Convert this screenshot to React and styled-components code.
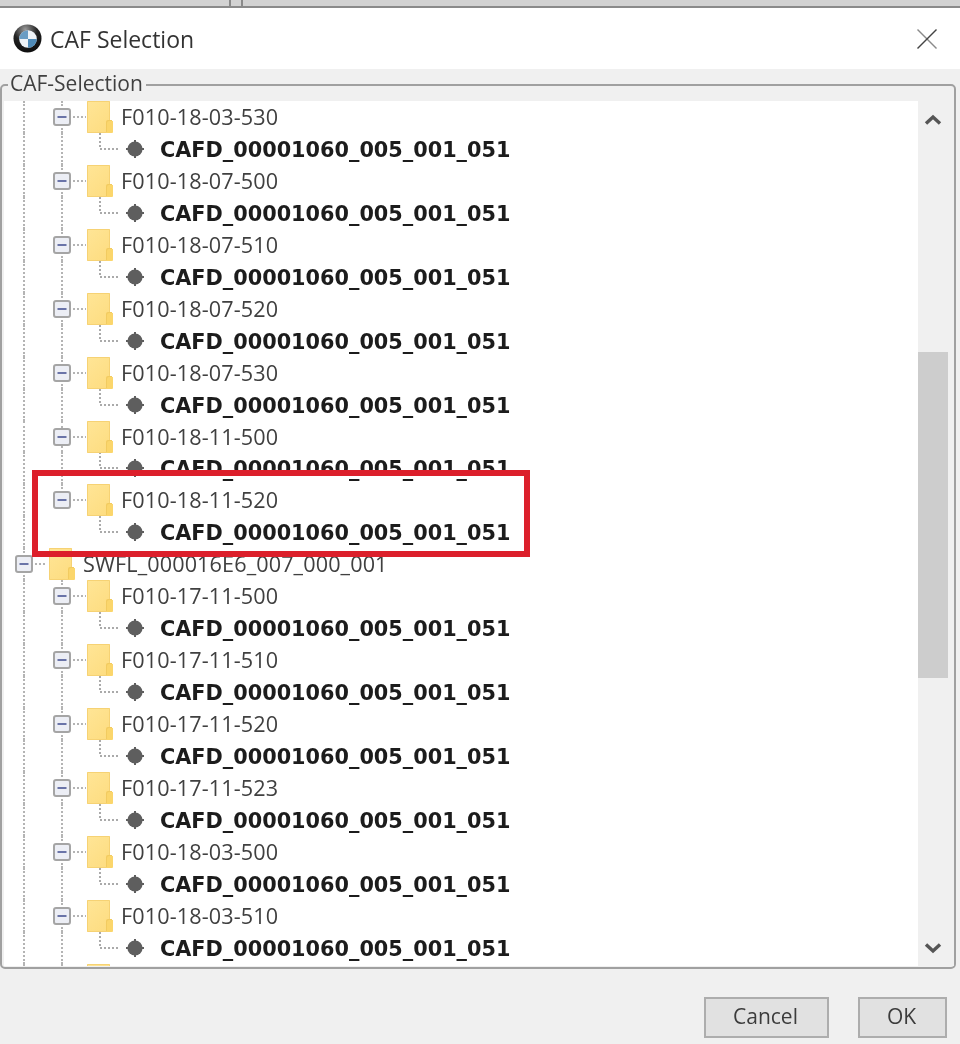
import React from 'react';
import styled, { createGlobalStyle } from 'styled-components';

const Global = createGlobalStyle`
  html, body { margin: 0; padding: 0; background: #f0f0f0; }
  body { font-family: "Open Sans", "Noto Sans", "Liberation Sans", sans-serif; overflow: hidden; }
`;

const Page = styled.div`
  position: relative;
  width: 960px;
  height: 1044px;
  display: flex;
  flex-direction: column;
  overflow: hidden;
  filter: blur(0.6px);
`;

const TopStrip = styled.div`
  height: 6px;
  flex: none;
  background: #d2d2d2;
  border-bottom: 2px solid #8a8a8a;
  display: flex;
  padding-left: 229px;
  gap: 10px;
`;
const StripLine = styled.span`
  width: 2px;
  background: #8a8a8a;
`;

const TitleBar = styled.header`
  height: 61px;
  flex: none;
  background: #fff;
  display: flex;
  align-items: center;
  padding: 0 22px 0 13px;
`;
const Title = styled.h1`
  margin: 2px 0 0 8px;
  flex: 1;
  font-size: 23px;
  font-weight: 400;
  color: #333;
  line-height: 1;
`;

const Body = styled.main`
  flex: 1;
  min-height: 0;
  background: #f0f0f0;
  display: flex;
  flex-direction: column;
`;

const Group = styled.fieldset`
  margin: 0 4px 0 0;
  padding: 0 0 0 2px;
  height: 900px;
  box-sizing: border-box;
  border: 2px solid #a0a0a0;
  border-radius: 5px;
  display: flex;
  min-width: 0;
`;
const Legend = styled.legend`
  margin-left: 4px;
  padding: 0 3px 0 2px;
  height: 32px;
  line-height: 28px;
  font-size: 21px;
  color: #404040;
`;

const Inner = styled.div`
  display: flex;
  width: 100%;
  height: 865px;
`;

const Tree = styled.div`
  flex: 1;
  min-width: 0;
  background: #fff;
  overflow: hidden;
`;

const Row = styled.div`
  height: 31.96px;
  display: flex;
  align-items: stretch;
`;

const Guide = styled.span`
  flex: none;
  width: ${p => p.$w}px;
  margin-left: ${p => p.$ml || 0}px;
  box-sizing: border-box;
  border-left: 2px dotted ${p => (p.$off ? 'transparent' : '#b4b4b4')};
`;

const NodeCell = styled.span`
  flex: none;
  margin-left: ${p => p.$ml || 0}px;
  display: flex;
  align-items: center;
`;

const ExpanderSlot = styled.span`
  position: relative;
  flex: none;
  width: 18px;
  align-self: stretch;
  display: flex;
  align-items: center;
  &::before {
    content: '';
    position: absolute;
    left: 8px;
    top: 0;
    bottom: ${p => (p.$end ? '50%' : '0')};
    border-left: 2px dotted #b4b4b4;
  }
  svg {
    position: relative;
  }
`;

const Spacer = styled.span`
  flex: none;
  width: ${p => p.$w}px;
`;

const Folder = styled.span`
  position: relative;
  flex: none;
  width: 23px;
  height: 32px;
  margin-right: ${p => p.$mr}px;
  box-sizing: border-box;
  background: linear-gradient(135deg, #ffe596, #fddc7f);
  border-radius: 1px;
  box-shadow: inset 0 0 0 1px #f6d274;
  &::after {
    content: '';
    position: absolute;
    right: -3px;
    bottom: 0;
    width: 6px;
    height: 12px;
    background: #fbd66c;
    border-radius: 2px 0 1px 0;
    box-shadow: -1px -1px 0 #f2cb60;
  }
`;

const FolderLabel = styled.span`
  font-size: 21.6px;
  line-height: 32px;
  color: #404040;
  white-space: nowrap;
  letter-spacing: 0.12px;
`;

const CafdLabel = styled.span`
  margin-left: 16px;
  padding-top: 1px;
  font-family: "DejaVu Sans", Verdana, sans-serif;
  font-size: 20.8px;
  font-weight: 700;
  line-height: 32px;
  color: #1c1c1c;
  white-space: nowrap;
`;

const Bullet = styled.span`
  flex: none;
  display: flex;
  align-items: center;
`;

const Scroll = styled.div`
  flex: none;
  width: 36px;
  display: flex;
  flex-direction: column;
  background: #f0f0f0;
`;
const ScrollBtn = styled.div`
  flex: none;
  height: 38px;
  width: 30px;
  display: flex;
  align-items: center;
  justify-content: center;
`;
const Track = styled.div`
  flex: 1;
  min-height: 0;
  width: 30px;
`;
const Thumb = styled.div`
  margin-top: 213px;
  height: 326px;
  background: #cdcdcd;
`;

const Footer = styled.footer`
  display: flex;
  justify-content: flex-end;
  gap: 29px;
  padding: 28px 13px 0 0;
`;
const Button = styled.button`
  width: ${p => p.$w}px;
  height: 41px;
  box-sizing: border-box;
  background: #e1e1e1;
  border: 2px solid #adadad;
  border-radius: 0;
  font-family: inherit;
  font-size: 21px;
  line-height: 33px;
  color: #3c3c3c;
  padding: 0 2px 3px 0;
`;

const Highlight = styled.div`
  position: absolute;
  left: 32px;
  top: 470px;
  width: 498px;
  height: 87px;
  box-sizing: border-box;
  border: 6px solid #dc1f2b;
`;

const Logo = () => (
  <svg width="29" height="29" viewBox="0 0 29 29" style={{ filter: 'blur(0.5px)' }}>
    <defs>
      <radialGradient id="ring" cx="42%" cy="18%" r="85%">
        <stop offset="0" stopColor="#9a9a9a" />
        <stop offset="0.5" stopColor="#222" />
        <stop offset="1" stopColor="#0c0c0c" />
      </radialGradient>
    </defs>
    <circle cx="14.5" cy="14.5" r="14" fill="url(#ring)" />
    <circle cx="15" cy="15" r="8.8" fill="#eef3f7" />
    <path d="M15 15V6.2a8.8 8.8 0 0 0-8.8 8.8Z" fill="#6a9dc4" />
    <path d="M15 15v8.8a8.8 8.8 0 0 0 8.8-8.8Z" fill="#4f8bb8" />
  </svg>
);

const CloseIcon = () => (
  <svg width="22" height="22" viewBox="0 0 22 22">
    <path d="M1.5 1.5L20.5 20.5" stroke="#8a8a8a" strokeWidth="1.4" fill="none" />
    <path d="M20.5 1.5L11 11L1.5 20.5" stroke="#444" strokeWidth="1.4" fill="none" />
  </svg>
);

const Chevron = ({ down }) => (
  <svg width="20" height="12" viewBox="0 0 20 12" style={{ marginTop: down ? 2 : 0 }}>
    <path d={down ? 'M3 2.5L10 9L17 2.5' : 'M3 9.5L10 3L17 9.5'} stroke="#555" strokeWidth="3.4" fill="none" />
  </svg>
);

const Expander = () => (
  <svg width="18" height="18" viewBox="0 0 18 18" style={{ flex: 'none' }}>
    <rect x="1" y="1" width="16" height="16" rx="2" fill="#eceef5" stroke="#a5a5a5" strokeWidth="2" />
    <rect x="4.5" y="8" width="9" height="2" fill="#6a74a8" />
  </svg>
);

const Dots = ({ w }) => (
  <svg width={w} height="2" viewBox={`0 0 ${w} 2`} style={{ flex: 'none' }}>
    <line x1="2" y1="1" x2={w} y2="1" stroke="#b4b4b4" strokeWidth="2" strokeDasharray="2 2" />
  </svg>
);

const ChildConnector = () => (
  <svg width="21" height="32" viewBox="0 0 21 32" style={{ flex: 'none' }}>
    <path d="M1 0V16H21" stroke="#aaa" strokeWidth="2" strokeDasharray="2 2" fill="none" />
  </svg>
);

const Gear = () => (
  <svg width="18" height="18" viewBox="0 0 18 18">
    <circle cx="9" cy="9" r="7.6" fill="#5e5e5e" />
    <path d="M9 0V18M0 9H18" stroke="#5e5e5e" strokeWidth="2" />
  </svg>
);

const CAFD = 'CAFD_00001060_005_001_051';

const FolderRow = ({ name, end }) => (
  <Row>
    <Guide $ml={19} $w={30} />
    <NodeCell>
      <ExpanderSlot $end={end}>
        <Expander />
      </ExpanderSlot>
      <Dots w={15} />
      <Spacer $w={1} />
      <Folder $mr={11} />
      {name && <FolderLabel>{name}</FolderLabel>}
    </NodeCell>
  </Row>
);

const CafdRow = ({ last }) => (
  <Row>
    <Guide $ml={19} $w={38} />
    <Guide $w={38} $off={last} />
    <ChildConnector />
    <Spacer $w={6} />
    <Bullet>
      <Gear />
    </Bullet>
    <CafdLabel>{CAFD}</CafdLabel>
  </Row>
);

const RootRow = ({ name }) => (
  <Row>
    <NodeCell $ml={11}>
      <ExpanderSlot>
        <Expander />
      </ExpanderSlot>
      <Dots w={12} />
      <Spacer $w={4} />
      <Folder $mr={11} />
      <FolderLabel>{name}</FolderLabel>
    </NodeCell>
  </Row>
);

const first = ['18-03-530', '18-07-500', '18-07-510', '18-07-520', '18-07-530', '18-11-500', '18-11-520'];
const second = ['17-11-500', '17-11-510', '17-11-520', '17-11-523', '18-03-500', '18-03-510'];

const Group1 = ({ list, closes }) =>
  list.map((n, i) => {
    const last = closes && i === list.length - 1;
    return (
      <React.Fragment key={n}>
        <FolderRow name={`F010-${n}`} end={last} />
        <CafdRow last={last} />
      </React.Fragment>
    );
  });

export default function App() {
  return (
    <Page>
      <Global />
      <TopStrip>
        <StripLine />
        <StripLine />
      </TopStrip>
      <TitleBar>
        <Logo />
        <Title>CAF Selection</Title>
        <CloseIcon />
      </TitleBar>
      <Body>
        <Group>
          <Legend>CAF-Selection</Legend>
          <Inner>
            <Tree>
              <Group1 list={first} closes />
              <RootRow name="SWFL_000016E6_007_000_001" />
              <Group1 list={second} />
              <FolderRow />
            </Tree>
            <Scroll>
              <ScrollBtn>
                <Chevron />
              </ScrollBtn>
              <Track>
                <Thumb />
              </Track>
              <ScrollBtn>
                <Chevron down />
              </ScrollBtn>
            </Scroll>
          </Inner>
        </Group>
        <Footer>
          <Button $w={125}>Cancel</Button>
          <Button $w={89}>OK</Button>
        </Footer>
      </Body>
      <Highlight />
    </Page>
  );
}
